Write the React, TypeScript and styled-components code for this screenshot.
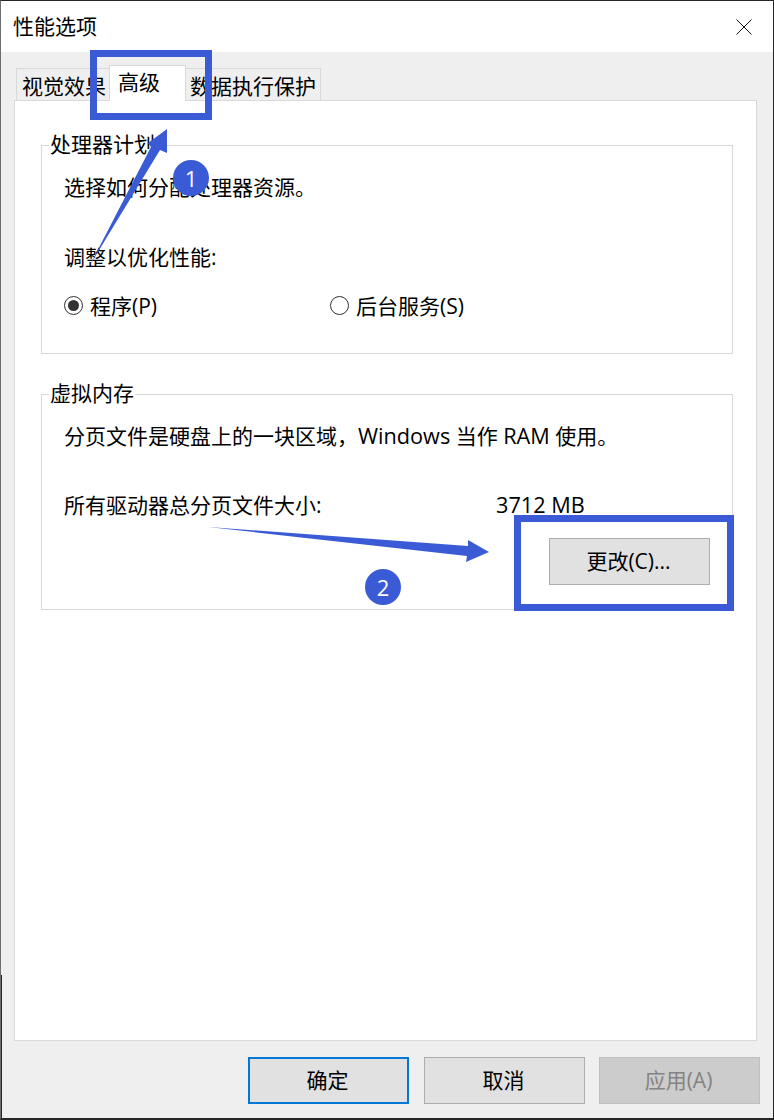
import React from "react";
import styled, { createGlobalStyle } from "styled-components";

const GlobalStyle = createGlobalStyle`
  html, body {
    margin: 0;
    padding: 0;
    background: #fff;
  }
  body {
    font-family: "Open Sans", "Noto Sans CJK SC", sans-serif;
    font-size: 21px;
    color: #000;
  }
`;

const Win = styled.div`
  position: relative;
  width: 774px;
  height: 1120px;
  box-sizing: border-box;
  display: flex;
  flex-direction: column;
  border-top: 1px solid #262626;
  border-right: 1px solid #262626;
  border-bottom: 2px solid #262626;
  border-left: 1px solid #6e6e6e;
  overflow: hidden;
`;

const EdgeShade = styled.div`
  position: absolute;
  left: 0;
  bottom: 0;
  width: 1px;
  height: 143px;
  background: #262626;
  z-index: 2;
`;

const TitleBar = styled.div`
  height: 51px;
  flex: none;
  display: flex;
  align-items: center;
  justify-content: space-between;
  padding: 0 21px 0 12px;
  background: #fff;
`;

const Title = styled.span`
  line-height: 51px;
`;

const CloseIcon = styled.svg`
  width: 16px;
  height: 16px;
  display: block;
`;

const Body = styled.div`
  flex: 1;
  display: flex;
  flex-direction: column;
  background: #efefef;
  padding: 14px 16px 0 13px;
  min-height: 0;
`;

const TabRow = styled.div`
  flex: none;
  height: 35px;
  display: flex;
  align-items: flex-end;
  padding-left: 2px;
  margin-bottom: -1px;
  position: relative;
  z-index: 1;
`;

const Tab = styled.div`
  box-sizing: border-box;
  height: 33px;
  padding: 0 4px 0 5px;
  line-height: 35px;
  background: #efefef;
  border: 1px solid #d9d9d9;
  white-space: nowrap;
`;

const ActiveTab = styled(Tab)`
  position: relative;
  z-index: 1;
  height: 36px;
  margin: 0 -2px 0 -2px;
  padding: 0 25px 0 8px;
  line-height: 33px;
  background: #fff;
  border-bottom: none;
`;

const Panel = styled.div`
  flex: 1;
  min-height: 0;
  box-sizing: border-box;
  background: #fff;
  border: 1px solid #d9d9d9;
  padding: 44px 23px 0 26px;
  display: flex;
  flex-direction: column;
  gap: 40px;
`;

const Group = styled.section<{ $height: number }>`
  position: relative;
  box-sizing: border-box;
  height: ${(p) => p.$height}px;
  border: 1px solid #d9d9d9;
  padding: 23px 22px 0 22px;
`;

const Legend = styled.span`
  position: absolute;
  top: -16px;
  left: 7px;
  padding: 0 1px;
  line-height: 28px;
  background: #fff;
`;

const Line = styled.div<{ $gap?: number }>`
  line-height: 36px;
  height: 36px;
  margin-bottom: ${(p) => p.$gap ?? 0}px;
  white-space: nowrap;
`;

const Latin = styled.span`
  font-size: 21.7px;
  line-height: 1;
`;

const RadioRow = styled.div`
  display: flex;
  align-items: center;
  height: 36px;
`;

const RadioOption = styled.label<{ $width: number }>`
  display: flex;
  align-items: center;
  gap: 7px;
  width: ${(p) => p.$width}px;
`;

const RadioDot = styled.span<{ $checked?: boolean }>`
  box-sizing: border-box;
  width: 19px;
  height: 19px;
  border-radius: 50%;
  border: 1px solid #333;
  background: #fff;
  display: flex;
  align-items: center;
  justify-content: center;
  &::after {
    content: "";
    width: 11px;
    height: 11px;
    border-radius: 50%;
    background: ${(p) => (p.$checked ? "#333" : "transparent")};
  }
`;

const SizeRow = styled.div`
  display: flex;
  align-items: center;
  line-height: 36px;
  height: 36px;
  white-space: nowrap;
`;

const SizeLabel = styled.span`
  width: 432px;
`;

const ButtonRow = styled.div`
  display: flex;
  justify-content: flex-end;
  margin: 15px 0 0;
`;

const Button = styled.button<{ $primary?: boolean }>`
  box-sizing: border-box;
  width: 161px;
  height: 47px;
  padding: 0 2px 3px 0;
  font: inherit;
  color: ${(p) => (p.disabled ? "#838383" : "#000")};
  background: ${(p) => (p.disabled ? "#cccccc" : "#e1e1e1")};
  border: ${(p) =>
    p.$primary ? "2px solid #0078d7" : p.disabled ? "1px solid #bfbfbf" : "1px solid #adadad"};
  border-radius: 0;
`;

const Footer = styled.div`
  flex: none;
  height: 77px;
  box-sizing: border-box;
  display: flex;
  justify-content: flex-end;
  gap: 15px;
  padding: 16px 0 0;
  margin-right: -3px;
  & > :last-child {
    margin-left: -1px;
  }
`;

const Overlay = styled.svg`
  position: absolute;
  left: -1px;
  top: -1px;
  width: 774px;
  height: 1120px;
  pointer-events: none;
  z-index: 2;
`;

const Badge = styled.div<{ $x: number; $y: number }>`
  position: absolute;
  left: ${(p) => p.$x}px;
  top: ${(p) => p.$y}px;
  width: 36px;
  height: 36px;
  border-radius: 50%;
  background: #3a5bd5;
  color: #fff;
  font-size: 22px;
  line-height: 36px;
  text-align: center;
  z-index: 3;
`;

export default function App() {
  return (
    <>
      <GlobalStyle />
      <Win>
        <EdgeShade />
        <TitleBar>
          <Title>性能选项</Title>
          <CloseIcon viewBox="0 0 16 16">
            <path d="M0.5 0.5L15.5 15.5M15.5 0.5L0.5 15.5" stroke="#111" strokeWidth="1" fill="none" />
          </CloseIcon>
        </TitleBar>
        <Body>
          <TabRow>
            <Tab>视觉效果</Tab>
            <ActiveTab>高级</ActiveTab>
            <Tab>数据执行保护</Tab>
          </TabRow>
          <Panel>
            <Group $height={209}>
              <Legend>处理器计划</Legend>
              <Line $gap={34}>选择如何分配处理器资源。</Line>
              <Line $gap={12}>调整以优化性能:</Line>
              <RadioRow>
                <RadioOption $width={266}>
                  <RadioDot $checked />
                  程序(P)
                </RadioOption>
                <RadioOption $width={200}>
                  <RadioDot />
                  后台服务(S)
                </RadioOption>
              </RadioRow>
            </Group>
            <Group $height={216}>
              <Legend>虚拟内存</Legend>
              <Line $gap={33}>
                分页文件是硬盘上的一块区域，<Latin>Windows</Latin> 当作 <Latin>RAM</Latin> 使用。
              </Line>
              <SizeRow>
                <SizeLabel>所有驱动器总分页文件大小:</SizeLabel>
                <Latin>3712 MB</Latin>
              </SizeRow>
              <ButtonRow>
                <Button>更改(C)...</Button>
              </ButtonRow>
            </Group>
          </Panel>
          <Footer>
            <Button $primary>确定</Button>
            <Button>取消</Button>
            <Button disabled>应用(A)</Button>
          </Footer>
        </Body>

        {/* annotations drawn over the dialog */}
        <Overlay viewBox="0 0 774 1120">
          <rect x="93.5" y="53.5" width="115" height="63" fill="none" stroke="#3a5bd5" strokeWidth="7" />
          <rect x="517.5" y="518.5" width="213" height="89" fill="none" stroke="#3a5bd5" strokeWidth="7" />
          <polygon points="90,265 151,147 148,143 167,129 167,153 160,150" fill="#3a5bd5" />
          <polygon points="208,527 468,546 468,540 489,552 466,562 467,556" fill="#3a5bd5" />
        </Overlay>
        <Badge $x={172} $y={159}>1</Badge>
        <Badge $x={364} $y={568}>2</Badge>
      </Win>
    </>
  );
}
